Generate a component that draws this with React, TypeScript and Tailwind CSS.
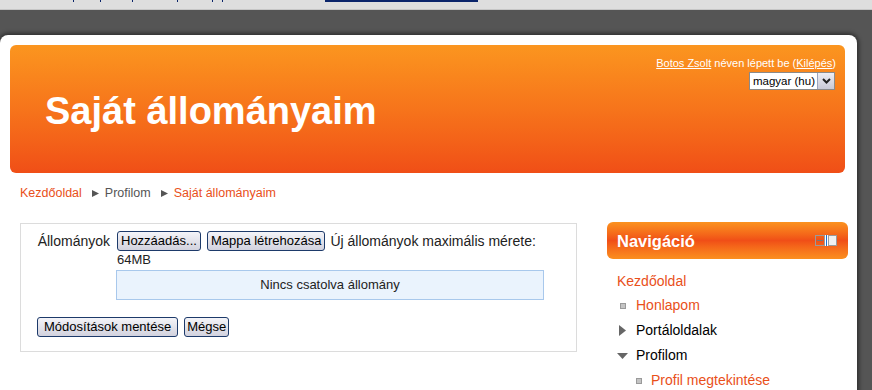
import React from 'react';

const LINK = 'text-[#e9501a]';

const Arrow = () => (
  <svg width="7" height="7" viewBox="0 0 7 7" className="mx-[6px] shrink-0">
    <path d="M0 0 L7 3.5 L0 7 Z" fill="#555" />
  </svg>
);

const Bullet = () => (
  <span className="inline-block w-[6px] h-[6px] bg-[#c4c4c4] border border-[#9a9a9a] shrink-0" />
);

const Btn: React.FC<{ children: React.ReactNode; pad?: string }> = ({ children, pad = 'px-[3px]' }) => (
  <button className={`h-[20px] ${pad} border border-[#1d3a6a] rounded-[3px] bg-gradient-to-b from-[#f4f4f8] to-[#d2d2de] text-[13px] leading-[18px] text-black whitespace-nowrap`}>
    {children}
  </button>
);

const navItems = [
  { label: 'Honlapom', kind: 'bullet', link: true, indent: 0 },
  { label: 'Portáloldalak', kind: 'right', link: false, indent: 0 },
  { label: 'Profilom', kind: 'down', link: false, indent: 0 },
  { label: 'Profil megtekintése', kind: 'bullet', link: true, indent: 1 },
];

export default function App() {
  return (
    <div className="w-[872px] h-[390px] overflow-hidden bg-[#555555] font-['Liberation_Sans',Arial,sans-serif]">
      {/* browser strip with cut-off link text */}
      <div className="h-[10px] bg-[#dedede] border-b border-[#c6c6c6] flex items-start">
        <span className="ml-[73px] w-px h-[2px] bg-[#0a246a]" />
        <span className="ml-[26px] w-px h-[2px] bg-[#0a246a]" />
        <span className="ml-[31px] w-px h-[2px] bg-[#0a246a]" />
        <span className="ml-[44px] w-px h-[2px] bg-[#0a246a]" />
        <span className="ml-[34px] w-px h-[2px] bg-[#0a246a]" />
        <span className="ml-[9px] w-px h-[2px] bg-[#0a246a]" />
        <span className="ml-[102px] w-[153px] h-[2px] bg-[#0a246a]" />
      </div>

      <div className="pt-[25px]">
        <div className="w-[857px] h-[400px] bg-white rounded-t-[8px] shadow-[0_0_4px_2px_rgba(0,0,0,0.45)] pt-[10px] pl-[10px] pr-[12px]">
          {/* header */}
          <div className="h-[128px] rounded-[6px] bg-gradient-to-b from-[#fb951f] to-[#f04e17] flex flex-col">
            <div className="pt-[11px] pr-[9px] flex flex-col items-end">
              <div className="text-[11px] leading-[14px] text-white whitespace-nowrap">
                <span className="underline">Botos Zsolt</span> néven lépett be (
                <span className="underline">Kilépés</span>)
              </div>
              <div className="mt-[2px] mr-[1px] h-[18px] w-[86px] bg-white border border-[#8a8a8a] flex items-center overflow-hidden">
                <span className="flex-1 min-w-0 pl-[3px] text-[11.5px] leading-[16px] text-black whitespace-nowrap overflow-hidden">magyar (hu)</span>
                <span className="w-[17px] h-[16px] shrink-0 bg-gradient-to-b from-[#eeeef4] to-[#c9c9d6] border-l border-[#9aa4bd] flex items-center justify-center">
                  <svg width="9" height="6" viewBox="0 0 9 6">
                    <path d="M1 1 L4.5 4.5 L8 1" stroke="#222" strokeWidth="2" fill="none" />
                  </svg>
                </span>
              </div>
            </div>
            <h1 className="mt-[2px] pl-[35px] text-[38px] leading-[38px] font-bold text-white">Saját állományaim</h1>
          </div>

          {/* breadcrumb */}
          <div className="mt-[12px] pl-[10px] h-[16px] flex items-center text-[12.5px] leading-[16px]">
            <span className={LINK}>Kezdőoldal</span>
            <span className="w-[4px]" />
            <Arrow />
            <span className="text-[#555]">Profilom</span>
            <span className="w-[4px]" />
            <Arrow />
            <span className={LINK}>Saját állományaim</span>
          </div>

          {/* main */}
          <div className="mt-[21px] flex items-start">
            <div className="ml-[10px] mt-[1px] w-[557px] h-[129px] shrink-0 border border-[#dcdcdc] pt-[7px]">
              <div className="flex text-[14px] text-[#222]">
                <div className="w-[96px] pr-[7px] text-right leading-[20px]">Állományok</div>
                <div className="flex flex-col">
                  <div className="flex items-center">
                    <Btn>Hozzáadás...</Btn>
                    <span className="w-[6px]" />
                    <Btn>Mappa létrehozása</Btn>
                    <span className="ml-[5px] leading-[20px] whitespace-nowrap">Új állományok maximális mérete:</span>
                  </div>
                  <div className="leading-[18px] text-[13px]">64MB</div>
                  <div className="-ml-[1px] mt-[1px] w-[428px] h-[30px] bg-[#eaf3fd] border border-[#a8c8ec] flex items-center justify-center text-[13px] text-[#222]">
                    Nincs csatolva állomány
                  </div>
                </div>
              </div>
              <div className="mt-[17px] ml-[16px] flex">
                <Btn pad="px-[6px]">Módosítások mentése</Btn>
                <span className="w-[6px]" />
                <Btn pad="px-[2px]">Mégse</Btn>
              </div>
            </div>

            <div className="ml-[30px] w-[241px] shrink-0">
              <div className="h-[37px] rounded-[6px] bg-gradient-to-b from-[#fb921f] via-[#f04e17] to-[#fb8f1f] flex items-center justify-between pl-[10px] pr-[11px]">
                <span className="text-[16.5px] font-bold text-white leading-[20px]">Navigáció</span>
                <span className="flex items-center">
                  <span className="w-[10px] h-[11px] border border-[#9a9a9a] flex items-center justify-center">
                    <span className="w-[6px] h-px bg-[#777]" />
                  </span>
                  <span className="w-[3px] h-[11px] bg-[#1e6fd0] border-x border-white" />
                  <span className="w-[9px] h-[11px] bg-[#f0f0f0] border border-[#9a9a9a]" />
                </span>
              </div>
              <div className="mt-[11px] pl-[10px] text-[14px]">
                <div className={`h-[23px] leading-[23px] ${LINK}`}>Kezdőoldal</div>
                {navItems.map((it) => (
                  <div
                    key={it.label}
                    className={`h-[25px] flex items-center ${it.indent ? 'pl-[15px]' : ''}`}
                  >
                    <span className="w-[19px] flex items-center">
                      {it.kind === 'bullet' && (
                        <span className={`${it.indent ? 'ml-[4px]' : 'ml-[3px]'} flex`}>
                          <Bullet />
                        </span>
                      )}
                      {it.kind === 'right' && (
                        <svg width="7" height="11" viewBox="0 0 7 11" className="ml-[2px]">
                          <path d="M0 0 L7 5.5 L0 11 Z" fill="#666" />
                        </svg>
                      )}
                      {it.kind === 'down' && (
                        <svg width="11" height="6" viewBox="0 0 11 6">
                          <path d="M0 0 L11 0 L5.5 6 Z" fill="#666" />
                        </svg>
                      )}
                    </span>
                    <span className={it.link ? LINK : 'text-black'}>{it.label}</span>
                  </div>
                ))}
              </div>
            </div>
          </div>
        </div>
      </div>
    </div>
  );
}
